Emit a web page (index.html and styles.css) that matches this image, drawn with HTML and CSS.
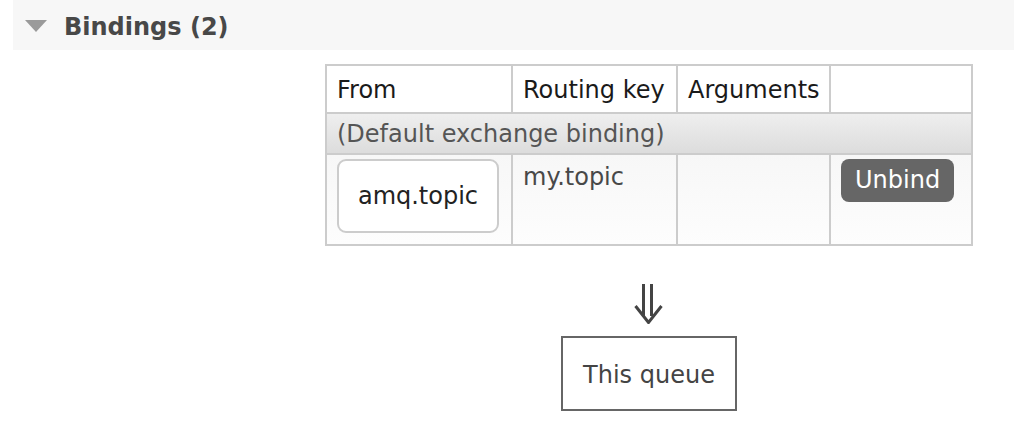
FILE: index.html
```html
<!DOCTYPE html>
<html>
<head>
<meta charset="utf-8">
<link rel="stylesheet" href="styles.css">
</head>
<body>
<div class="section-head">
  <span class="toggle"></span>
  <h2 class="title">Bindings (2)</h2>
</div>
<div class="bindings">
  <table class="list">
    <colgroup>
      <col class="c1"><col class="c2"><col class="c3"><col class="c4">
    </colgroup>
    <thead>
      <tr><th>From</th><th>Routing key</th><th>Arguments</th><th></th></tr>
    </thead>
    <tbody>
      <tr class="default-row"><td colspan="4">(Default exchange binding)</td></tr>
      <tr class="data-row">
        <td><span class="exchange">amq.topic</span></td>
        <td class="key">my.topic</td>
        <td></td>
        <td><button class="unbind">Unbind</button></td>
      </tr>
    </tbody>
  </table>
  <svg class="arrow" width="30" height="40" viewBox="0 0 30 40">
    <line x1="9.5" y1="0" x2="9.5" y2="32" stroke="#444" stroke-width="3"/>
    <line x1="17.5" y1="0" x2="17.5" y2="32" stroke="#444" stroke-width="3"/>
    <polyline points="1.5,22 14.5,38.5 27.5,22" fill="none" stroke="#444" stroke-width="3"/>
  </svg>
  <div class="queue">This queue</div>
</div>
</body>
</html>
```
FILE: styles.css
```css
html, body {
  margin: 0;
  padding: 0;
  background: #fff;
}
body {
  font-family: "DejaVu Sans", Verdana, sans-serif;
  font-size: 24px;
  line-height: 28px;
  color: #484848;
}
.section-head {
  margin-left: 13px;
  height: 50px;
  background: #f7f7f7;
  display: flex;
  align-items: center;
}
.toggle {
  width: 0;
  height: 0;
  margin-left: 12px;
  margin-right: 17px;
  margin-top: 2px;
  border-left: 11px solid transparent;
  border-right: 11px solid transparent;
  border-top: 12px solid #9a9a9a;
}
.title {
  margin: 0;
  font-size: 24px;
  font-weight: bold;
  color: #484848;
  line-height: 28px;
  margin-top: 3px;
}
.bindings {
  margin-left: 326px;
  margin-top: 14px;
  width: 646px;
  display: flex;
  flex-direction: column;
  align-items: center;
}
.list {
  border-collapse: collapse;
  table-layout: fixed;
  width: 646px;
  border: 2px solid #cccccc;
}
.c1 { width: 186px; }
.c2 { width: 165px; }
.c3 { width: 153px; }
.c4 { width: 142px; }
.list th, .list td {
  border: 2px solid #cccccc;
  text-align: left;
  vertical-align: top;
}
.list th {
  font-weight: normal;
  color: #1a1a1a;
  padding: 10px 10px 8px;
  background: #fff;
}
.default-row td {
  padding: 6px 10px 5px;
  color: #555;
  background: linear-gradient(#efefef, #dcdcdc);
}
.data-row td {
  padding: 4px 10px 11px;
  background: linear-gradient(#f7f7f7, #fdfdfd);
}
.exchange {
  display: block;
  box-sizing: border-box;
  width: 162px;
  border: 2px solid #cccccc;
  border-radius: 9px;
  background: #fff;
  color: #222;
  text-align: center;
  padding: 21px 0 21px;
}
.key {
  color: #484848;
}
.data-row td.key {
  padding-top: 8px;
}
.unbind {
  font-family: inherit;
  font-size: 24px;
  line-height: 29px;
  color: #fff;
  background: #666;
  border: none;
  border-radius: 8px;
  padding: 7px 14px;
  margin-top: 0;
  width: 113px;
  cursor: pointer;
}
.arrow {
  display: block;
  margin-top: 38px;
}
.queue {
  margin-top: 12px;
  border: 2px solid #666;
  padding: 23px 20px 20px;
  color: #444;
}
```
